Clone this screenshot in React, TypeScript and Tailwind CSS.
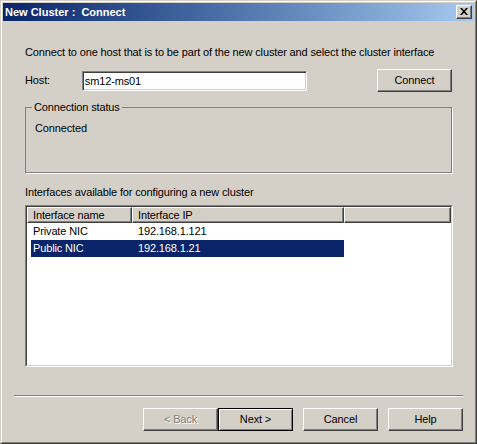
import React from 'react'

type BtnProps = {
  label: string
  disabled?: boolean
  isDefault?: boolean
}

function Win2kButton({ label, disabled, isDefault }: BtnProps) {
  if (isDefault) {
    return (
      <button className="w-[75px] h-[23px] border border-black bg-[#d4d0c8] shadow-[inset_1px_1px_0_#ffffff,inset_-1px_-1px_0_#808080] text-black text-[11px] leading-none">
        {label}
      </button>
    )
  }
  return (
    <button
      className={`w-[75px] h-[23px] border border-t-white border-l-white border-r-[#404040] border-b-[#404040] bg-[#d4d0c8] shadow-[inset_-1px_-1px_0_#808080] text-[11px] leading-none ${
        disabled ? 'text-[#808080] [text-shadow:1px_1px_0_#ffffff]' : 'text-black'
      }`}
    >
      {label}
    </button>
  )
}

const rows = [
  { name: 'Private NIC', ip: '192.168.1.121', selected: false },
  { name: 'Public NIC', ip: '192.168.1.21', selected: true },
]

export default function App() {
  return (
    <div className="w-[477px] h-[444px] border border-t-[#d4d0c8] border-l-[#d4d0c8] border-r-[#404040] border-b-[#404040] bg-[#d4d0c8] font-['Liberation_Sans',Arial,sans-serif] text-[11px] leading-[13px] tracking-[-0.14px] text-black select-none">
      <div className="h-full border border-t-white border-l-white border-r-[#808080] border-b-[#808080] p-px flex flex-col">
        {/* Title bar */}
        <div className="h-[18px] flex items-center bg-linear-to-r from-[#0a246a] to-[#a6caf0] pl-[2px] pr-[2px]">
          <span className="flex-1 text-white font-bold text-[11px] tracking-normal whitespace-pre">New Cluster :  Connect</span>
          <div className="w-[16px] h-[14px] flex items-center justify-center border border-t-white border-l-white border-r-[#404040] border-b-[#404040] bg-[#d4d0c8] shadow-[inset_-1px_-1px_0_#808080]">
            <svg width="8" height="7" viewBox="0 0 8 7" className="mb-px">
              <path d="M0 0h2l2 2.2L6 0h2L5 3.5 8 7H6L4 4.8 2 7H0l3-3.5z" fill="#000" />
            </svg>
          </div>
        </div>

        {/* Body */}
        <div className="flex-1 flex flex-col">
          <div className="flex-1 flex flex-col px-[22px] pt-[25px]">
            <p>Connect to one host that is to be part of the new cluster and select the cluster interface</p>

            <div className="mt-[10px] flex items-center h-[23px]">
              <span className="w-[57px]">Host:</span>
              <input
                defaultValue="sm12-ms01"
                readOnly
                className="w-[226px] h-[20px] bg-white border border-t-[#808080] border-l-[#808080] border-r-white border-b-white shadow-[inset_1px_1px_0_#404040,inset_-1px_-1px_0_#d4d0c8] pl-[2px] text-[11px] outline-none"
              />
              <div className="ml-[70px]">
                <Win2kButton label="Connect" />
              </div>
            </div>

            <fieldset className="mt-[9px] h-[72px] w-[427px] border border-[#808080] shadow-[1px_1px_0_#ffffff]">
              <legend className="ml-[6px] px-[2px]">Connection status</legend>
              <div className="pt-[8px] pl-[9px]">Connected</div>
            </fieldset>

            <p className="mt-[13px]">Interfaces available for configuring a new cluster</p>

            {/* List view */}
            <div className="mt-[6px] w-[428px] h-[162px] border border-t-[#808080] border-l-[#808080] border-r-white border-b-white">
              <div className="h-full border border-t-[#404040] border-l-[#404040] border-r-[#d4d0c8] border-b-[#d4d0c8] bg-white">
                <div className="flex h-[16px]">
                  <div className="w-[105px] border border-t-white border-l-white border-r-[#404040] border-b-[#404040] bg-[#d4d0c8] shadow-[inset_-1px_-1px_0_#808080] pl-[5px] flex items-center">
                    Interface name
                  </div>
                  <div className="w-[212px] border border-t-white border-l-white border-r-[#404040] border-b-[#404040] bg-[#d4d0c8] shadow-[inset_-1px_-1px_0_#808080] pl-[5px] flex items-center">
                    Interface IP
                  </div>
                  <div className="flex-1 border border-t-white border-l-white border-r-[#404040] border-b-[#404040] bg-[#d4d0c8] shadow-[inset_-1px_-1px_0_#808080]" />
                </div>
                {rows.map((row) => (
                  <div key={row.name} className="flex h-[17px] pl-[4px]">
                    <div
                      className={`flex items-center w-[313px] ${
                        row.selected ? 'bg-[#0a246a] text-white' : ''
                      }`}
                    >
                      <span className="w-[101px] pl-[2px]">{row.name}</span>
                      <span className="pl-[6px]">{row.ip}</span>
                    </div>
                  </div>
                ))}
              </div>
            </div>
          </div>

          {/* Footer */}
          <div className="mx-[11px] border-t border-t-[#808080] border-b border-b-white" />
          <div className="flex justify-end gap-[10px] mt-[11px] mb-[10px] pr-[11px]">
            <div className="flex">
              <Win2kButton label="< Back" disabled />
              <Win2kButton label="Next >" isDefault />
            </div>
            <Win2kButton label="Cancel" />
            <Win2kButton label="Help" />
          </div>
        </div>
      </div>
    </div>
  )
}
